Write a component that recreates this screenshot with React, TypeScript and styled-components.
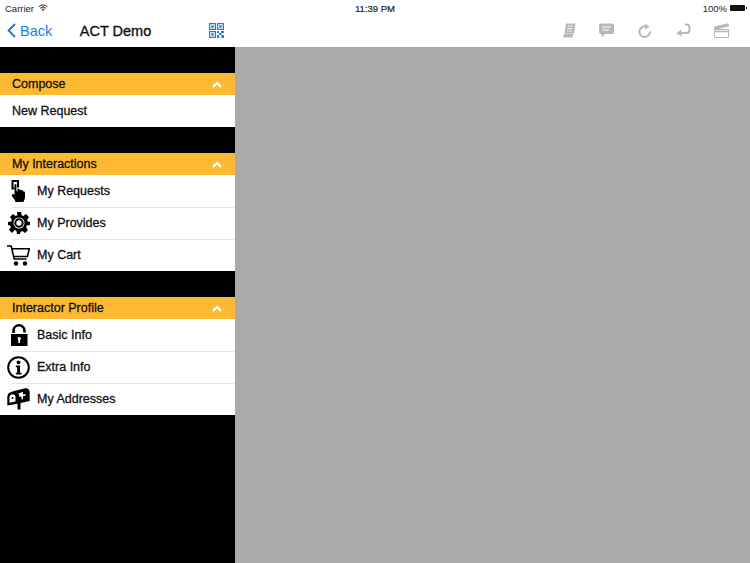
import React from 'react';
import styled, { createGlobalStyle } from 'styled-components';

const Global = createGlobalStyle`
    html, body {
        margin: 0;
        padding: 0;
        height: 100%;
        background: #000;
    }
    body {
        font-family: "Liberation Sans", Arial, sans-serif;
        overflow: hidden;
    }
`;

const Page = styled.div`
    width: 750px;
    height: 563px;
    display: flex;
    flex-direction: column;
`;

const Top = styled.header`
    background: #fff;
    height: 47px;
    display: flex;
    flex-direction: column;
`;

const StatusBar = styled.div`
    height: 16px;
    display: grid;
    grid-template-columns: 1fr auto 1fr;
    align-items: center;
    padding: 0 5px;
    font-size: 9.5px;
    color: #222;
`;

const Carrier = styled.div`
    display: flex;
    align-items: center;
    gap: 4px;
`;

const Clock = styled.div`
    font-size: 9.5px;
    -webkit-text-stroke: 0.2px #222;
`;

const Battery = styled.div`
    display: flex;
    align-items: center;
    justify-content: flex-end;
    gap: 3px;
`;

const BatteryCell = styled.span`
    width: 15px;
    height: 6px;
    background: #111;
    border-radius: 1px;
    position: relative;
    &::after {
        content: '';
        position: absolute;
        right: -2px;
        top: 2px;
        width: 1px;
        height: 2px;
        background: #111;
    }
`;

const NavRow = styled.div`
    flex: 1;
    display: flex;
`;

const NavBar = styled.nav`
    width: 235px;
    display: grid;
    grid-template-columns: 1fr auto 1fr;
    align-items: center;
    padding: 0 11px 2px 7px;
    box-sizing: border-box;
`;

const BackLink = styled.div`
    display: flex;
    align-items: center;
    gap: 4px;
    color: #1c7fe0;
    font-size: 14.5px;
`;

const Title = styled.div`
    font-size: 14.5px;
    color: #111;
    -webkit-text-stroke: 0.35px #111;
    white-space: nowrap;
`;

const QrSlot = styled.div`
    display: flex;
    justify-content: flex-end;
`;

const Toolbar = styled.div`
    flex: 1;
    display: flex;
    justify-content: flex-end;
    align-items: center;
    gap: 23px;
    padding: 0 21px 2px 0;
    color: #b7b7b7;
`;

const Body = styled.div`
    flex: 1;
    display: flex;
    min-height: 0;
`;

const Sidebar = styled.aside`
    width: 235px;
    background: #000;
    display: flex;
    flex-direction: column;
    gap: 26px;
    padding-top: 26px;
    box-sizing: border-box;
`;

const Content = styled.main`
    flex: 1;
    background: #aaaaaa;
`;

const SectionHeader = styled.div`
    height: 22px;
    background: #fdb933;
    display: flex;
    align-items: center;
    justify-content: space-between;
    padding: 0 13px 0 12px;
    font-size: 12.5px;
    color: #111;
    -webkit-text-stroke: 0.3px #111;
`;

const Row = styled.div<{ $indent: boolean }>`
    height: 32px;
    background: #fff;
    display: flex;
    align-items: center;
    position: relative;
    padding-left: ${p => (p.$indent ? '7px' : '12px')};
    gap: 7px;
    font-size: 12.5px;
    color: #111;
    -webkit-text-stroke: 0.3px #111;
    & + &::before {
        content: '';
        position: absolute;
        top: 0;
        left: 12px;
        right: 0;
        height: 1px;
        background: #e4e4e4;
    }
`;

const IconBox = styled.span`
    width: 23px;
    height: 24px;
    display: flex;
    align-items: center;
    justify-content: center;
    color: #000;
    -webkit-text-stroke: 0;
`;

const Wifi = () => (
    <svg width="10" height="8" viewBox="0 0 10 8" fill="none" stroke="#222" strokeWidth="1">
        <path d="M.6 2.8a6.2 6.2 0 0 1 8.8 0M2.1 4.3a4.1 4.1 0 0 1 5.8 0M3.5 5.7a2.1 2.1 0 0 1 3 0" />
        <path d="M5 7.6 4.1 6.7a1.3 1.3 0 0 1 1.8 0z" fill="#222" stroke="none" />
    </svg>
);

const BackChevron = () => (
    <svg width="9" height="15" viewBox="0 0 9 15" fill="none" stroke="#1c7fe0" strokeWidth="2">
        <path d="M8 1 1.6 7.5 8 14" />
    </svg>
);

const QrIcon = () => (
    <svg width="15" height="15" viewBox="0 0 15 15" fill="#1c7fe0">
        <path fillRule="evenodd" d="M0 0h7v7H0zM1.2 1.2v4.6h4.6V1.2zM8 0h7v7H8zM9.2 1.2v4.6h4.6V1.2zM0 8h7v7H0zM1.2 9.2v4.6h4.6V9.2z" />
        <path d="M2.3 2.3h2.4v2.4H2.3zM10.3 2.3h2.4v2.4h-2.4zM2.3 10.3h2.4v2.4H2.3zM8 8h2v2H8zM12 8h3v2h-3zM10 10h2.5v2H10zM8 12h2v3H8zM12.5 12H15v3h-2.5z" />
    </svg>
);

const ScrollIcon = () => (
    <svg width="13" height="15" viewBox="0 0 13 15" fill="currentColor">
        <path d="M3 .5h9.5L11 10.5H1.5z" />
        <path d="M1 11h9l-.5 3.5H0z" />
        <path d="M4.5 3h5.5M4 5.5h5.5M3.6 8h5.5" stroke="#fff" strokeWidth=".8" />
    </svg>
);

const ChatIcon = () => (
    <svg width="15" height="15" viewBox="0 0 15 15" fill="currentColor">
        <path d="M2 .5h11a2 2 0 0 1 2 2v6.5a2 2 0 0 1-2 2H6l-3.5 3.500V11H2a2 2 0 0 1-2-2V2.500a2 2 0 0 1 2-2z" />
        <path d="M3 4h9M3 7h7" stroke="#fff" strokeWidth="1" />
    </svg>
);

const RedoIcon = () => (
    <svg width="16" height="16" viewBox="0 0 16 16" fill="none" stroke="currentColor" strokeWidth="2">
        <path d="M9.500 3.700A5.300 5.300 0 1 0 13 8.500" />
        <path d="M8 .5 12.500 3.700 8 6.500z" fill="currentColor" stroke="none" />
    </svg>
);

const ReplyIcon = () => (
    <svg width="15" height="15" viewBox="0 0 15 15" fill="none" stroke="currentColor" strokeWidth="2">
        <path d="M9 1.500h1.500a3 3 0 0 1 3 3v2.500a3 3 0 0 1-3 3H4" />
        <path d="M5.500 6.500 .5 10l5 3.500z" fill="currentColor" stroke="none" />
    </svg>
);

const ClapperIcon = () => (
    <svg width="15" height="15" viewBox="0 0 15 15" fill="none" stroke="currentColor" strokeWidth="1">
        <path d="M.5 6.500h14v8H.5z" />
        <path d="M.5 4 14 .8l.5 2.200L1 6.300z" fill="currentColor" />
        <path d="M1 8.500h13" strokeWidth="1.500" />
    </svg>
);

const HandIcon = () => (
    <svg width="16" height="22" viewBox="0 0 16 22">
        <path fillRule="evenodd" d="M.5 0h7.500v7.500H6V2H2.500v5.500h1V9.500H.5z" />
        <path d="M3.500 4.300h1.900v7h1v-2.200c1-.5 1.800-.2 1.900.8.900-.6 1.800-.3 2 .7.900-.5 1.900-.2 2 .9.900-.3 1.700.1 1.700 1.200V17c0 2-.8 3.200-1.600 5H4.500c-.4-2-1.700-3.300-3.300-5.400-.8-1.200-.2-3 1.200-2.600l1.100.8z" />
    </svg>
);

const GearIcon = () => (
    <svg width="22" height="22" viewBox="0 0 22 22">
        <path
            fillRule="evenodd"
            d="M9 0h4l.6 3.200 1.700.7L18 2l3 3-1.900 2.700.7 1.700L22 10v3l-3.200.6-.7 1.700L20 18l-3 3-2.700-1.900-1.700.7L12 22H9l-.6-3.200-1.700-.7L4 21l-3-3 1.900-2.700-.7-1.700L0 13v-3l3.200-.6.7-1.700L2 5l3-3 2.700 1.900 1.700-.7zM11 5.500a5.500 5.500 0 1 0 0 11 5.500 5.500 0 0 0 0-11z"
        />
        <circle cx="11" cy="11" r="3.700" fill="none" stroke="#000" strokeWidth="2" />
    </svg>
);

const CartIcon = () => (
    <svg width="23" height="21" viewBox="0 0 23 21" fill="none" stroke="#000" strokeWidth="1.600">
        <path d="M0 1h4.200l3 13h12.300" />
        <path d="M5 3.800h17.200l-1.700 7.700H7" />
        <circle cx="9" cy="18.500" r="2.200" fill="#000" stroke="none" />
        <circle cx="18" cy="18.500" r="2.200" fill="#000" stroke="none" />
    </svg>
);

const LockIcon = () => (
    <svg width="18" height="22" viewBox="0 0 18 22">
        <path fill="none" stroke="#000" strokeWidth="2.600" d="M3.500 9V6.500a5.500 5.200 0 0 1 11 0v2" />
        <path fillRule="evenodd" d="M1 10h16.500v12H1zM9.200 13a1.700 1.700 0 0 0-.8 3.100V19h1.700v-2.900A1.700 1.700 0 0 0 9.200 13z" />
    </svg>
);

const InfoIcon = () => (
    <svg width="23" height="23" viewBox="0 0 23 23">
        <circle cx="11.500" cy="11.500" r="10.300" fill="none" stroke="#000" strokeWidth="2" />
        <circle cx="11.500" cy="6.300" r="1.900" />
        <path d="M8.800 9.500h4.200v7.300h1.500v1.700H8.800v-1.700h1.400v-5.600H8.800z" />
    </svg>
);

const MailboxIcon = () => (
    <svg width="23" height="22" viewBox="0 0 23 22">
        <path
            fillRule="evenodd"
            d="M5.500 3.500 18 .3c2.800-.4 4.700 1.300 4.700 4v8.700L13.500 15v6.500h-3v-5.800L.3 17.500V9c0-3 2-5 5.200-5.500zM5.500 6.200C3.600 6.500 2.500 7.700 2.500 9.500v5.300l6-1.200V9.500c0-2-1.200-3.500-3-3.300zM11.500 5.500c.6 1 .9 2.300.9 3.500l2.100-.4v2.900l1.500-.3V8.300l2.500-.5V5.900l-2.500.5V3.800z"
        />
        <circle cx="5.500" cy="10" r="1" />
    </svg>
);

const Caret = () => (
    <svg width="10" height="7" viewBox="0 0 10 7" fill="none" stroke="#fff" strokeWidth="2.200">
        <path d="M1 6 5 2l4 4" />
    </svg>
);

interface MenuItem {
    label: string;
    icon?: React.ReactNode;
}

interface MenuSection {
    title: string;
    items: MenuItem[];
}

const sections: MenuSection[] = [
    { title: 'Compose', items: [{ label: 'New Request' }] },
    {
        title: 'My Interactions',
        items: [
            { label: 'My Requests', icon: <HandIcon /> },
            { label: 'My Provides', icon: <GearIcon /> },
            { label: 'My Cart', icon: <CartIcon /> },
        ],
    },
    {
        title: 'Interactor Profile',
        items: [
            { label: 'Basic Info', icon: <LockIcon /> },
            { label: 'Extra Info', icon: <InfoIcon /> },
            { label: 'My Addresses', icon: <MailboxIcon /> },
        ],
    },
];

export default function App() {
    return (
        <Page>
            <Global />
            <Top>
                <StatusBar>
                    <Carrier>
                        Carrier <Wifi />
                    </Carrier>
                    <Clock>11:39 PM</Clock>
                    <Battery>
                        100% <BatteryCell />
                    </Battery>
                </StatusBar>
                <NavRow>
                    <NavBar>
                        <BackLink>
                            <BackChevron />
                            Back
                        </BackLink>
                        <Title>ACT Demo</Title>
                        <QrSlot>
                            <QrIcon />
                        </QrSlot>
                    </NavBar>
                    <Toolbar>
                        <ScrollIcon />
                        <ChatIcon />
                        <RedoIcon />
                        <ReplyIcon />
                        <ClapperIcon />
                    </Toolbar>
                </NavRow>
            </Top>
            <Body>
                <Sidebar>
                    {sections.map(section => (
                        <section key={section.title}>
                            <SectionHeader>
                                {section.title}
                                <Caret />
                            </SectionHeader>
                            {section.items.map(item => (
                                <Row key={item.label} $indent={!!item.icon}>
                                    {item.icon && <IconBox>{item.icon}</IconBox>}
                                    {item.label}
                                </Row>
                            ))}
                        </section>
                    ))}
                </Sidebar>
                <Content />
            </Body>
        </Page>
    );
}
